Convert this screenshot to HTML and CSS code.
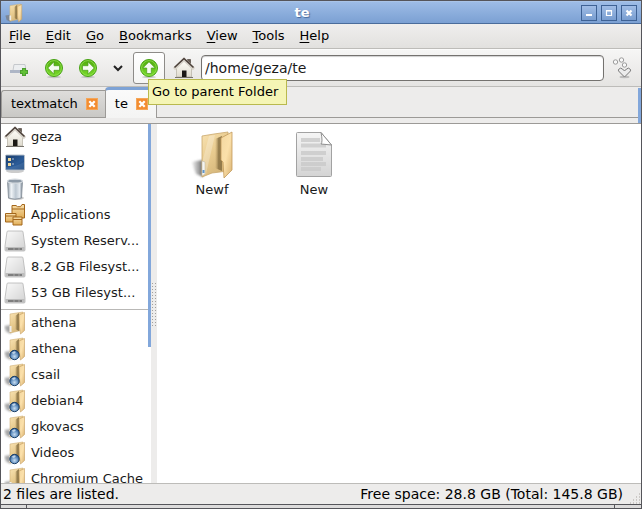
FILE: index.html
```html
<!DOCTYPE html>
<html lang="en">
<head>
<meta charset="utf-8">
<title>te</title>
<link rel="stylesheet" href="styles.css">
</head>
<body>
<svg class="defs" aria-hidden="true">
  <defs>
    <linearGradient id="gFolder" x1="0" y1="0" x2="0.6" y2="1"><stop offset="0" stop-color="#f9e3b4"/><stop offset="0.5" stop-color="#e9cc90"/><stop offset="1" stop-color="#d3b478"/></linearGradient>
    <linearGradient id="gFlap" x1="0" y1="0" x2="1" y2="1"><stop offset="0" stop-color="#f3d7a0"/><stop offset="0.5" stop-color="#fbe0aa"/><stop offset="1" stop-color="#d9b271"/></linearGradient>
    <linearGradient id="gInner" x1="0" y1="0" x2="1" y2="0"><stop offset="0" stop-color="#a58955" stop-opacity="0"/><stop offset="0.5" stop-color="#7a6438" stop-opacity="0.8"/><stop offset="1" stop-color="#8b7344"/></linearGradient>
    <linearGradient id="gShade" x1="0" y1="0" x2="1" y2="0"><stop offset="0" stop-color="#888" stop-opacity="0.15"/><stop offset="1" stop-color="#666"/></linearGradient>
    <linearGradient id="gGreen" x1="0" y1="0" x2="0" y2="1"><stop offset="0" stop-color="#4fa80c"/><stop offset="1" stop-color="#79dc2c"/></linearGradient>
    <linearGradient id="gDisk" x1="0" y1="0" x2="1" y2="1"><stop offset="0" stop-color="#fafafa"/><stop offset="1" stop-color="#d2d2d2"/></linearGradient>
    <linearGradient id="gPage" x1="0" y1="0" x2="0" y2="1"><stop offset="0" stop-color="#f5f5f5"/><stop offset="1" stop-color="#d4d4d4"/></linearGradient>
    <linearGradient id="gCan" x1="0" y1="0" x2="1" y2="0"><stop offset="0" stop-color="#8e9aa6"/><stop offset="0.25" stop-color="#f0f4f7"/><stop offset="0.55" stop-color="#bcc7d1"/><stop offset="0.8" stop-color="#e2e8ee"/><stop offset="1" stop-color="#7b8794"/></linearGradient>
    <linearGradient id="gScreen" x1="0" y1="0" x2="1" y2="1"><stop offset="0" stop-color="#183a68"/><stop offset="0.6" stop-color="#2c5c98"/><stop offset="1" stop-color="#1c4272"/></linearGradient>
    <linearGradient id="gWall" x1="0" y1="0" x2="0" y2="1"><stop offset="0" stop-color="#fffef8"/><stop offset="1" stop-color="#dedace"/></linearGradient>
    <linearGradient id="gBox" x1="0" y1="0" x2="0" y2="1"><stop offset="0" stop-color="#f8dfac"/><stop offset="1" stop-color="#e0ac55"/></linearGradient>
    <radialGradient id="gGlobe" cx="0.5" cy="0.65" r="0.6"><stop offset="0" stop-color="#c7dcf0"/><stop offset="0.55" stop-color="#6b97c4"/><stop offset="1" stop-color="#23508a"/></radialGradient>
    <filter id="soft" x="-20%" y="-20%" width="140%" height="140%"><feGaussianBlur stdDeviation="0.9"/></filter>
  </defs>
  <symbol id="folder" viewBox="0 0 42 48">
    <path d="M1 31 5 30 12 29V46L5 43 3 38Z" fill="url(#gShade)" filter="url(#soft)"/>
    <path d="M11 5 23 3 37 1V40L21 42 16 44 11 46Z" fill="url(#gFolder)" stroke="#c9a76c" stroke-width="0.8"/>
    <path d="M12 28 18 5 24 4 15 43 12 44Z" fill="#fff" opacity="0.25"/>
    <path d="M24 8 31 5V40L24 37Z" fill="url(#gInner)" opacity="0.9"/>
    <path d="M30 7 41 1V39L33 47 32 31 30 29Z" fill="url(#gFlap)" stroke="#c39b5c" stroke-width="0.8"/>
    <path d="M11 30 14 31V43L11 45Z" fill="#f5f5f2" stroke="#bbb29a" stroke-width="0.5"/>
    <path d="M11.500 39h2v3h-2z" fill="#5d95cc"/>
  </symbol>
  <symbol id="folder-sm" viewBox="0 0 22 24">
    <path d="M0.500 15 7 14V23L2 20.500Z" fill="#777" opacity="0.65" filter="url(#soft)"/>
    <path d="M6 3 19 1V19L6 22Z" fill="url(#gFolder)" stroke="#d0b077" stroke-width="0.6"/>
    <path d="M11 5 15 2V20L11 18Z" fill="url(#gInner)" opacity="0.9"/>
    <path d="M15 4 20.500 1.500V19.500L16.500 23 15.500 15Z" fill="url(#gFlap)" stroke="#c39b5c" stroke-width="0.6"/>
    <path d="M5.500 15h2v6h-2z" fill="#eee"/>
  </symbol>
  <symbol id="remote" viewBox="0 0 22 24">
    <use href="#folder-sm" width="22" height="24"/>
    <circle cx="10.500" cy="18" r="4.700" fill="url(#gGlobe)" stroke="#1c4068" stroke-width="1"/>
    <path d="M7.500 16Q10 13 12 15L10 17Z" fill="#d8e7f4" opacity="0.8"/>
  </symbol>
  <symbol id="home" viewBox="0 0 22 22">
    <path d="M3.500 11 11 4 18.500 11V20H3.500Z" fill="url(#gWall)" stroke="#b5b0a4" stroke-width="0.7"/>
    <path d="M14.500 2.500h3V8l-3-2.500z" fill="#695d55" stroke="#443a34" stroke-width="0.6"/>
    <path d="M1 12 11 2.500 21 12" fill="none" stroke="#d9d4cb" stroke-width="3.200"/>
    <path d="M1.500 10.500 11 1.500 20.500 10.500" fill="none" stroke="#4b403a" stroke-width="1.600"/>
    <path d="M9 13.500h4.500V20H9z" fill="#1b1815"/>
    <path d="M2 20.500h18" stroke="#77736c" stroke-width="1"/>
  </symbol>
  <symbol id="desktop" viewBox="0 0 22 22">
    <ellipse cx="11" cy="19" rx="9" ry="2" fill="#aaa" opacity="0.6"/>
    <rect x="1.500" y="3" width="19" height="15" rx="1" fill="url(#gScreen)" stroke="#b9c2cc"/>
    <path d="M2 15Q10 16 20 10V17H2Z" fill="#5b87b9" opacity="0.35"/>
    <path d="M4 6h3v3H4zM4 11h3v3H4z" fill="#eed79b"/>
    <path d="M8 7h2M8 12h2" stroke="#b6c5d8"/>
  </symbol>
  <symbol id="trash" viewBox="0 0 22 22">
    <ellipse cx="12" cy="20" rx="8" ry="2" fill="#999" opacity="0.5"/>
    <path d="M3.500 3H18.500L17.500 20Q11 22.500 4.500 20Z" fill="url(#gCan)" stroke="#7f8993" stroke-width="0.8"/>
    <ellipse cx="11" cy="3.200" rx="7.500" ry="2" fill="#8d9aa7" stroke="#d5dadf" stroke-width="1.200"/>
  </symbol>
  <symbol id="apps" viewBox="0 0 22 22">
    <g fill="url(#gBox)" stroke="#a3661b" stroke-width="1">
      <path d="M8 1.500h4l1.500 1.200h3L18 0.500h2.500V14H8Z"/><path d="M8 5h12.500"/>
      <path d="M1.500 9.500H12V18H1.500Z"/><path d="M1.500 12H12"/>
      <path d="M9 13h9v8H9Z"/><path d="M9 15.500h9"/>
    </g>
  </symbol>
  <symbol id="disk" viewBox="0 0 22 22">
    <path d="M4 1H18Q19 1 19 2L21 16V20Q21 21 20 21H2Q1 21 1 20V16L3 2Q3 1 4 1Z" fill="url(#gDisk)" stroke="#b5b5b5" stroke-width="0.8"/>
    <path d="M1.500 17H20.500V20.500H1.500Z" fill="#bdbdbd"/>
    <path d="M4 19h14" stroke="#555" stroke-width="1.200"/>
    <path d="M10 18v2M15 18v2" stroke="#aaa"/>
  </symbol>
  <symbol id="arrow" viewBox="0 0 22 22">
    <ellipse cx="11" cy="20" rx="7" ry="1.200" fill="#aaa" opacity="0.6"/>
    <circle cx="11" cy="11" r="8.500" fill="url(#gGreen)" stroke="#48a315" stroke-width="1"/>
    <circle cx="11" cy="11" r="7.400" fill="none" stroke="#92e14f" stroke-width="0.800"/>
  </symbol>
  <symbol id="point" viewBox="0 0 22 22">
    <path d="M4.800 11 11 4.800V8.700H16.500V13.300H11V17.200Z" fill="#f6fbf2" stroke="#4a9c1c" stroke-width="0.700"/>
  </symbol>
  <symbol id="close" viewBox="0 0 12 12">
    <rect x="0.500" y="0.500" width="11" height="11" fill="#f38d31" stroke="#f4a659"/>
    <path d="M3.300 3.300 8.700 8.700M8.700 3.300 3.300 8.700" stroke="#fff" stroke-width="2.200"/>
  </symbol>
  <symbol id="page" viewBox="0 0 38 48">
    <path d="M1.500 2.500Q1.500 1.500 2.500 1.500H26L36.500 14V44.500Q36.500 45.500 35.500 45.500H2.500Q1.500 45.500 1.500 44.500Z" fill="url(#gPage)" stroke="#a2a2a2"/>
    <path d="M6 9H25M6 14.500H31M6 22H31M6 28H28M6 33H31M6 38H26" stroke="#cacaca" stroke-width="4" opacity="0.8"/>
    <path d="M26 1.500Q28 11 26 13L36.500 14Z" fill="#fff" stroke="#8f8f8f"/>
  </symbol>
</svg>

<div class="window">
  <header class="titlebar">
    <svg class="app-icon" viewBox="0 0 22 24"><use href="#folder-sm"/></svg>
    <h1 class="title">te</h1>
    <div class="controls">
      <button class="control" aria-label="Minimize"><svg viewBox="0 0 14 14"><path d="M4 8h6v2H4z" fill="#fff"/></svg></button>
      <button class="control" aria-label="Maximize"><svg viewBox="0 0 14 14"><path d="M4.500 5h5v4.500h-5zM4 4.500h6" fill="none" stroke="#fff" stroke-width="1.200"/></svg></button>
      <button class="control" aria-label="Close"><svg viewBox="0 0 14 14"><path d="M4.500 4.500 9.500 9.500M9.500 4.500 4.500 9.500" stroke="#fff" stroke-width="2.200"/></svg></button>
    </div>
  </header>

  <nav class="menubar">
    <button class="menu"><u>F</u>ile</button>
    <button class="menu"><u>E</u>dit</button>
    <button class="menu"><u>G</u>o</button>
    <button class="menu"><u>B</u>ookmarks</button>
    <button class="menu"><u>V</u>iew</button>
    <button class="menu"><u>T</u>ools</button>
    <button class="menu"><u>H</u>elp</button>
  </nav>

  <div class="toolbar">
    <button class="tool" aria-label="New tab"><svg viewBox="0 0 22 22"><path d="M5 7.500h11l1 6H4z" fill="#eceef0" stroke="#c5c8cc"/><path d="M1 13h18v3H1z" fill="#aeb6c6"/><path d="M15 11v8M11 15h8" stroke="#4c9f30" stroke-width="4"/><path d="M15 12v6M12 15h6" stroke="#62c136" stroke-width="2"/></svg></button>
    <button class="tool" aria-label="Back"><svg viewBox="0 0 22 22"><use href="#arrow"/><use href="#point"/></svg></button>
    <button class="tool" aria-label="Forward"><svg viewBox="0 0 22 22"><use href="#arrow"/><use href="#point" transform="rotate(180 11 11)"/></svg></button>
    <button class="tool narrow" aria-label="History"><svg viewBox="0 0 22 22"><path d="M6 9 10 13 14 9" fill="none" stroke="#222" stroke-width="2"/></svg></button>
    <div class="tool-wrap">
      <button class="tool hover" aria-label="Up" aria-describedby="tip"><svg viewBox="0 0 22 22"><use href="#arrow"/><use href="#point" transform="rotate(90 11 11)"/></svg></button>
      <div class="tooltip" id="tip" role="tooltip">Go to parent Folder</div>
    </div>
    <button class="tool" aria-label="Home"><svg viewBox="0 0 22 22"><use href="#home"/></svg></button>
    <input class="address" type="text" aria-label="Location" value="/home/geza/te">
    <button class="tool go" aria-label="Go"><svg viewBox="0 0 22 22"><g fill="#f8f8f8" stroke="#9b9b9b"><circle cx="4.500" cy="5" r="2.200"/><circle cx="10.500" cy="3" r="2.200"/><circle cx="13.500" cy="8" r="2.200"/></g><ellipse cx="13.500" cy="20" rx="5" ry="1.200" fill="#aaa" opacity="0.7"/><path d="M7.500 12.500Q9.500 10 11.500 12L13.500 14 15.500 12Q17.500 10 19.500 12.500 20 14 18.500 15L13.500 20 8.500 15Q7 14 7.500 12.500Z" fill="#ececec" stroke="#777"/></svg></button>
  </div>

  <div class="tabs">
    <div class="tab"><span>textmatch</span><button class="close" aria-label="Close textmatch"><svg viewBox="0 0 12 12"><use href="#close"/></svg></button></div>
    <div class="tab active"><span>te</span><button class="close" aria-label="Close te"><svg viewBox="0 0 12 12"><use href="#close"/></svg></button></div>
    <div class="tab-rest"></div>
    <div class="tab-mark"></div>
  </div>

  <main class="panes">
    <aside class="side">
      <ul class="places">
        <li class="place"><svg viewBox="0 0 22 22"><use href="#home"/></svg><span>geza</span></li>
        <li class="place"><svg viewBox="0 0 22 22"><use href="#desktop"/></svg><span>Desktop</span></li>
        <li class="place"><svg viewBox="0 0 22 22"><use href="#trash"/></svg><span>Trash</span></li>
        <li class="place"><svg viewBox="0 0 22 22"><use href="#apps"/></svg><span>Applications</span></li>
        <li class="place"><svg viewBox="0 0 22 22"><use href="#disk"/></svg><span>System Reserv...</span></li>
        <li class="place"><svg viewBox="0 0 22 22"><use href="#disk"/></svg><span>8.2 GB Filesyst...</span></li>
        <li class="place"><svg viewBox="0 0 22 22"><use href="#disk"/></svg><span>53 GB Filesyst...</span></li>
        <li class="rule" role="separator"></li>
        <li class="place"><svg viewBox="0 0 22 24"><use href="#folder-sm"/></svg><span>athena</span></li>
        <li class="place"><svg viewBox="0 0 22 24"><use href="#remote"/></svg><span>athena</span></li>
        <li class="place"><svg viewBox="0 0 22 24"><use href="#remote"/></svg><span>csail</span></li>
        <li class="place"><svg viewBox="0 0 22 24"><use href="#remote"/></svg><span>debian4</span></li>
        <li class="place"><svg viewBox="0 0 22 24"><use href="#remote"/></svg><span>gkovacs</span></li>
        <li class="place"><svg viewBox="0 0 22 24"><use href="#remote"/></svg><span>Videos</span></li>
        <li class="place"><svg viewBox="0 0 22 24"><use href="#folder-sm"/></svg><span>Chromium Cache</span></li>
      </ul>
      <div class="scroll"><div class="thumb"></div></div>
    </aside>
    <div class="splitter"><div class="grip"></div></div>
    <section class="files">
      <figure class="file"><svg class="folder" viewBox="0 0 42 48"><use href="#folder"/></svg><figcaption>Newf</figcaption></figure>
      <figure class="file"><svg class="page" viewBox="0 0 38 48"><use href="#page"/></svg><figcaption>New</figcaption></figure>
    </section>
  </main>

  <footer class="status">
    <span>2 files are listed.</span>
    <span class="space">Free space: 28.8 GB (Total: 145.8 GB)</span>
    <svg class="resize" viewBox="0 0 12 12"><path d="M1 11h11M4 8h8M7 5h5M10 2h2" stroke="#aaa5a0" stroke-dasharray="1 2"/></svg>
  </footer>
  <div class="frame-bottom"><i></i><i></i><i></i></div>
</div>
</body>
</html>
```
FILE: styles.css
```css
* { box-sizing: border-box; }
body {
  margin: 0;
  font: 13px/18px "DejaVu Sans", sans-serif;
  color: #1a1a1a;
}
button {
  margin: 0;
  padding: 0;
  border: 0;
  background: none;
  font: inherit;
  color: inherit;
}
svg { display: block; }
.defs { position: absolute; width: 0; height: 0; }
.window {
  display: flex;
  flex-direction: column;
  height: 100vh;
  border: 1px solid #55555a;
  background: #edeceb;
}

.titlebar {
  display: flex;
  align-items: center;
  flex: none;
  height: 23px;
  padding: 0 4px;
  border-top: 1px solid #a9c4e8;
  border-bottom: 1px solid #4a6c9b;
  background: linear-gradient(#9dbce6, #7ba0d3);
}
.app-icon { width: 18px; height: 20px; }
.title {
  flex: 1;
  margin: 0;
  text-align: center;
  font-size: 13px;
  line-height: 18px;
  color: #fff;
  text-shadow: 1px 1px 1px #46689a;
}
.controls { display: flex; gap: 4px; }
.control {
  width: 16px;
  height: 16px;
  border: 1px solid #3e6295;
  background: linear-gradient(#a0bde6, #789dd0);
}
.control svg { width: 14px; height: 14px; }

.menubar {
  display: flex;
  align-items: center;
  flex: none;
  gap: 15px;
  height: 25px;
  padding: 0 8px;
  border-bottom: 1px solid #bdbcb9;
  background: linear-gradient(#efeeed, #e2e1df);
  color: #000;
}
.menu u { text-underline-offset: 2px; }

.toolbar {
  display: flex;
  align-items: center;
  flex: none;
  height: 38px;
  padding: 0 2px;
  border-top: 1px solid #fbfbfb;
  border-bottom: 1px solid #bdbcb9;
  background: linear-gradient(#f6f6f5, #e5e4e2);
}
.tool-wrap { position: relative; }
.tool {
  display: flex;
  flex: none;
  align-items: center;
  justify-content: center;
  width: 34px;
  height: 34px;
}
.tool svg { width: 22px; height: 22px; }
.narrow { width: 28px; }
.hover {
  width: 32px;
  height: 32px;
  margin-right: 2px;
  border: 1px solid #8d8b88;
  border-radius: 3px;
  background: linear-gradient(#fff, #f5f5f4);
}
.tooltip {
  position: absolute;
  z-index: 2;
  left: 15px;
  top: 27px;
  padding: 3px 8px 3px 3px;
  border: 1px solid #b9b94e;
  background: #f5f5b5;
  white-space: nowrap;
  color: #000;
}
.address {
  flex: 1;
  min-width: 0;
  height: 26px;
  padding: 0 3px;
  border: 1px solid #74726f;
  border-radius: 4px;
  background: #fff;
  font: inherit;
  font-size: 14px;
  color: inherit;
  box-shadow: inset 0 1px 1px #cfcfcf;
}
.go { width: 35px; }

.tabs {
  display: flex;
  align-items: flex-end;
  flex: none;
  height: 37px;
  padding-bottom: 5px;
  border-bottom: 1px solid #9c9a97;
  background: #edeceb;
}
.tab {
  display: flex;
  align-items: center;
  gap: 8px;
  height: 28px;
  padding: 0 7px 0 9px;
  border: 1px solid #9c9a97;
  border-right: 0;
  border-radius: 3px 0 0 0;
  background: linear-gradient(#dedddb, #c9c8c5);
  color: #000;
}
.active {
  height: 31px;
  padding: 0 8px 0 9px;
  border: 1px solid #9c9a97;
  border-top: 3px solid #7da2d5;
  border-bottom: 0;
  border-radius: 4px 4px 0 0;
  background: linear-gradient(#fafafa, #f4f4f3);
}
.close, .close svg { width: 12px; height: 12px; }
.tab-rest { flex: 1; border-bottom: 1px solid #9c9a97; }
.tab-mark { width: 3px; height: 35px; margin-bottom: -5px; background: #82a7db; }

.panes { display: flex; flex: 1; min-height: 0; background: #fff; }
.side { display: flex; flex: none; width: 150px; overflow: hidden; }
.places { flex: 1; min-width: 0; margin: 0; padding: 0; list-style: none; overflow: hidden; }
.place {
  display: flex;
  align-items: center;
  gap: 5px;
  height: 26px;
  padding-left: 3px;
  white-space: nowrap;
}
.place svg { flex: none; width: 22px; height: 22px; }
.place svg[viewBox="0 0 22 24"] { height: 24px; }
.rule { height: 4px; }
.rule::before {
  content: "";
  display: block;
  height: 3px;
  border-bottom: 1px solid #b9b8b6;
}
.scroll { flex: none; width: 3px; }
.thumb { height: 62%; background: #82a7db; }
.splitter {
  display: flex;
  align-items: center;
  justify-content: center;
  flex: none;
  width: 6px;
  background: #edeceb;
}
.grip {
  width: 4px;
  height: 46px;
  background: conic-gradient(#aaa8a5 25%, transparent 0) -1px 1px / 3px 3px;
  background: repeating-linear-gradient(#edeceb 0 2px, transparent 2px 3px), repeating-linear-gradient(90deg, #a3a19e 0 1px, #edeceb 1px 3px);
}
.files { display: flex; align-items: flex-start; flex: 1; min-width: 0; padding: 7px 4px; }
.file {
  display: flex;
  flex-direction: column;
  align-items: center;
  flex: none;
  gap: 2px;
  width: 102px;
  margin: 0;
}
.folder { width: 42px; height: 48px; }
.page { width: 38px; height: 48px; }

.status {
  display: flex;
  align-items: center;
  flex: none;
  height: 21px;
  padding: 0 0 0 2px;
  border-top: 1px solid #bdbcb9;
  font-size: 14px;
  color: #000;
}
.space { margin-left: auto; margin-right: 6px; }
.resize { align-self: flex-end; width: 12px; height: 12px; }
.frame-bottom {
  display: flex;
  flex: none;
  height: 4px;
  border-top: 1px solid #55555a;
  background: #dcdbdb;
}
.frame-bottom i { width: 26px; border-right: 1px solid #55555a; }
.frame-bottom i:nth-child(2) { flex: 1; }
.frame-bottom i:nth-child(3) { border: 0; }
```
